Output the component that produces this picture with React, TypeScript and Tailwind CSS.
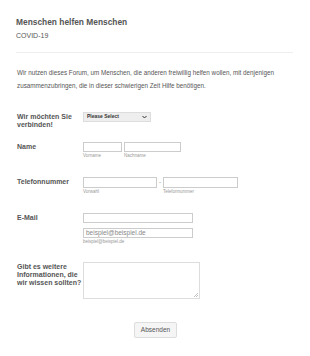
import React from "react";

const font = { fontFamily: '"Liberation Sans", Arial, sans-serif' };

function Field({ label, children, className = "" }: { label: React.ReactNode; children: React.ReactNode; className?: string }) {
  return (
    <div className={`flex ${className}`}>
      <div className="w-[66px] shrink-0 pt-[1px] text-[7px] font-bold leading-[8px] text-[#555]">{label}</div>
      <div className="flex-1">{children}</div>
    </div>
  );
}

const inputCls = "h-[10px] border border-[#ccc] bg-white";

export default function App() {
  return (
    <div style={font} className="min-h-[356px] w-[310px] bg-white px-4 text-[#555]">
      <div className="pt-[17px]">
        <h1 className="text-[8.4px] font-bold leading-[11px] text-[#555]">Menschen helfen Menschen</h1>
        <p className="mt-[4px] text-[7px] leading-[8px]">COVID-19</p>
      </div>
      <div className="mt-[12px] h-px w-[277px] bg-[#eee]" />
      <p className="mt-[13px] pl-[1px] text-[6.3px] leading-[13px] text-[#555]">
        Wir nutzen dieses Forum, um Menschen, die anderen freiwillig helfen wollen, mit denjenigen zusammenzubringen, die in dieser schwierigen Zeit Hilfe benötigen.
      </p>

      <div className="pl-[1px]">
        <Field label={<>Wir möchten Sie<br />verbinden!</>} className="mt-[20px]">
          <div className="flex h-[10px] w-[68px] items-center justify-between border border-[#ddd] bg-[#eee] px-[3px] text-[5px] font-bold text-[#333]">
            <span>Please Select</span>
            <svg width="5" height="4" viewBox="0 0 10 8"><path d="M1 2l4 4 4-4" stroke="#333" strokeWidth="2" fill="none" /></svg>
          </div>
        </Field>

        <Field label="Name" className="mt-[13px]">
          <div className="flex gap-[2px]">
            <div>
              <div className={`${inputCls} w-[39px]`} />
              <div className="mt-[1px] text-[4.5px] leading-[6px] text-[#999]">Vorname</div>
            </div>
            <div>
              <div className={`${inputCls} w-[57px]`} />
              <div className="mt-[1px] text-[4.5px] leading-[6px] text-[#999]">Nachname</div>
            </div>
          </div>
        </Field>

        <Field label="Telefonnummer" className="mt-[18px]">
          <div className="flex">
            <div>
              <div className={`${inputCls} h-[11px] w-[74px]`} />
              <div className="mt-[1px] text-[4.5px] leading-[6px] text-[#999]">Vorwahl</div>
            </div>
            <span className="w-[6px] text-center text-[6px] leading-[11px] text-[#777]">-</span>
            <div>
              <div className={`${inputCls} h-[11px] w-[75px]`} />
              <div className="mt-[1px] text-[4.5px] leading-[6px] text-[#999]">Telefonnummer</div>
            </div>
          </div>
        </Field>

        <Field label="E-Mail" className="mt-[18px]">
          <div className={`${inputCls} w-[110px]`} />
          <div className={`${inputCls} mt-[5px] flex w-[110px] items-center px-[2px] text-[6.5px] text-[#888]`}>beispiel@beispiel.de</div>
          <div className="mt-[1px] text-[4.5px] leading-[6px] text-[#999]">beispiel@beispiel.de</div>
        </Field>

        <Field label={<>Gibt es weitere<br />Informationen, die<br />wir wissen sollten?</>} className="mt-[17px]">
          <div className="relative h-[37px] w-[117px] border border-[#ddd] bg-white">
            <svg className="absolute bottom-[1px] right-[1px]" width="4" height="4" viewBox="0 0 4 4">
              <path d="M4 0L0 4M4 2L2 4" stroke="#999" strokeWidth="0.6" />
            </svg>
          </div>
        </Field>
      </div>

      <div className="mt-[23px] flex justify-center pl-[1px]">
        <button className="h-[16px] w-[43px] rounded-[2px] border border-[#ddd] bg-[#f5f5f5] text-[6.5px] text-[#555]">Absenden</button>
      </div>
    </div>
  );
}
